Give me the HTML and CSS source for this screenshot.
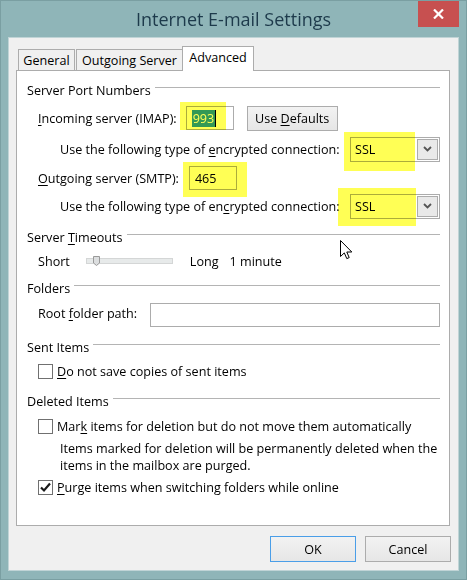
FILE: index.html
```html
<!DOCTYPE html>
<html>
<head>
<meta charset="utf-8">
<link rel="stylesheet" href="styles.css">
</head>
<body>
<div class="window">
  <div class="titlebar">
    <div class="title">Internet E-mail Settings</div>
    <div class="close">
      <svg width="11" height="10" viewBox="0 0 11 10"><path d="M1 0.5 L10 9.5 M10 0.5 L1 9.5" stroke="#fff" stroke-width="2.2" fill="none"/></svg>
    </div>
  </div>
  <div class="client">
    <div class="tabs">
      <div class="tab tab-general">General</div>
      <div class="tab tab-outgoing">Outgoing Server</div>
      <div class="tab tab-advanced active">Advanced</div>
    </div>
    <div class="panel">
      <div class="group-head head-ports"><span>Server Port Numbers</span><div class="rule"></div></div>

      <div class="row row-incoming indent1">
        <span class="label"><u>I</u>ncoming server (IMAP):</span>
        <div class="textbox tb-incoming"><span class="sel">993</span><span class="caret"></span></div>
        <div class="btn btn-defaults"><span>Use <u>D</u>efaults</span></div>
      </div>

      <div class="row row-enc1 indent2">
        <span class="label">Use the following type of <u>e</u>ncrypted connection:</span>
        <div class="combo"><span class="combo-text">SSL</span><div class="combo-btn"><svg width="9" height="6" viewBox="0 0 9 6"><path d="M1 1 L4.5 4.5 L8 1" stroke="#555" stroke-width="1.8" fill="none"/></svg></div></div>
      </div>

      <div class="row row-outgoing indent1">
        <span class="label"><u>O</u>utgoing server (SMTP):</span>
        <div class="textbox tb-outgoing">465</div>
      </div>

      <div class="row row-enc2 indent2">
        <span class="label">Use the following type of en<u>c</u>rypted connection:</span>
        <div class="combo"><span class="combo-text">SSL</span><div class="combo-btn"><svg width="9" height="6" viewBox="0 0 9 6"><path d="M1 1 L4.5 4.5 L8 1" stroke="#555" stroke-width="1.8" fill="none"/></svg></div></div>
      </div>

      <div class="group-head head-timeouts"><span>Server <u>T</u>imeouts</span><div class="rule"></div></div>

      <div class="row row-slider indent1">
        <span class="label">Short</span>
        <div class="track">
          <svg class="thumb" width="7" height="10" viewBox="0 0 7 10"><path d="M0.5 0.5 H6.5 V7 L3.5 9.5 L0.5 7 Z" fill="#dcdedf" stroke="#9a9a9a"/></svg>
        </div>
        <span class="label long">Long</span>
        <span class="label minute">1 minute</span>
      </div>

      <div class="group-head head-folders"><span>Folders</span><div class="rule"></div></div>

      <div class="row row-root indent1">
        <span class="label label-root">Root <u>f</u>older path:</span>
        <div class="textbox tb-root"></div>
      </div>

      <div class="group-head head-sent"><span>Sent Items</span><div class="rule"></div></div>

      <div class="row row-check row-nosave indent1">
        <span class="check"></span>
        <span class="label"><u>D</u>o not save copies of sent items</span>
      </div>

      <div class="group-head head-deleted"><span>Deleted Items</span><div class="rule"></div></div>

      <div class="row row-check row-mark indent1">
        <span class="check"></span>
        <span class="label">Mar<u>k</u> items for deletion but do not move them automatically</span>
      </div>

      <div class="note indent2">Items marked for deletion will be permanently deleted when the<br>items in the mailbox are purged.</div>

      <div class="row row-check row-purge indent1">
        <span class="check checked"><svg width="13" height="13" viewBox="0 0 13 13"><path d="M2 6.5 L5 9.5 L11 2.5" stroke="#1a1a1a" stroke-width="2.2" fill="none"/></svg></span>
        <span class="label"><u>P</u>urge items when switching folders while online</span>
      </div>

      <div class="hl hl-1"></div>
      <div class="hl hl-2"></div>
      <div class="hl hl-3"></div>
      <div class="hl hl-4"></div>
    </div>
    <div class="buttons">
      <div class="btn btn-ok">OK</div>
      <div class="btn btn-cancel">Cancel</div>
    </div>
  </div>
  <svg class="cursor" width="13" height="20" viewBox="0 0 13 20"><path d="M0.5 0.5 L0.5 16.5 L4.3 12.9 L6.8 18.6 L9.2 17.6 L6.8 12 L11.8 12 Z" fill="#fff" stroke="#000" stroke-width="1" stroke-linejoin="miter"/></svg>
</div>
</body>
</html>
```

FILE: styles.css
```css
html, body {
  margin: 0;
  padding: 0;
}

.window {
  width: 467px;
  height: 580px;
  box-sizing: border-box;
  background: #8fb5b8;
  border: 1px solid #7a9fa2;
  padding: 0 7px 8px 7px;
  position: relative;
  display: flex;
  flex-direction: column;
  font-family: "Open Sans", "Noto Sans", sans-serif;
  font-size: 12.6px;
  color: #000;
  overflow: hidden;
}

.titlebar {
  height: 36px;
  flex: none;
  display: grid;
  grid-template-columns: 1fr auto 1fr;
  align-items: start;
}

.title {
  grid-column: 2;
  padding-top: 6px;
  font-size: 18px;
  line-height: 24px;
  color: #1d3a4b;
  white-space: nowrap;
}

.close {
  grid-column: 3;
  justify-self: end;
  width: 41px;
  height: 26px;
  background: #c75050;
  display: flex;
  align-items: center;
  justify-content: center;
}

.client {
  flex: 1;
  background: #f0f0f0;
  border: 1px solid #c0d4d6;
  padding: 8px 7px 0 7px;
  display: flex;
  flex-direction: column;
}

.tabs {
  height: 24px;
  display: flex;
  align-items: flex-end;
  padding-left: 2px;
  position: relative;
  z-index: 2;
}

.tab {
  box-sizing: border-box;
  height: 21px;
  border: 1px solid #acacac;
  border-bottom: none;
  background: #f0f0f0;
  display: flex;
  align-items: center;
  justify-content: center;
  white-space: nowrap;
}

.tab-general { width: 57px; }
.tab-outgoing { width: 107px; margin-left: 1px; }
.tab-advanced { width: 72px; margin-left: -1px; }

.tab.active {
  height: 25px;
  margin-bottom: -1px;
  background: #fff;
  padding-bottom: 3px;
}

.panel {
  position: relative;
  box-sizing: border-box;
  width: 434px;
  height: 456px;
  background: #fff;
  border: 1px solid #acacac;
  padding: 0 9px 0 10px;
  flex: none;
}

.group-head {
  height: 16px;
  display: flex;
  align-items: center;
  white-space: nowrap;
}

.group-head .rule {
  flex: 1;
  height: 1px;
  background: #b4b4b4;
  margin-left: 4px;
  margin-bottom: 5px;
}

.head-ports { margin-top: 11px; }
.head-timeouts { margin-top: 10px; }
.head-folders { margin-top: 11px; }
.head-sent { margin-top: 12px; }
.head-deleted { margin-top: 13px; }

.row {
  display: flex;
  align-items: center;
  white-space: nowrap;
}

.indent1 { padding-left: 11px; }
.indent2 { padding-left: 33px; }

.row-incoming { margin-top: 7px; height: 26px; }
.row-enc1 { margin-top: 5px; height: 26px; }
.row-outgoing { margin-top: 3px; height: 26px; }
.row-enc2 { margin-top: 2px; height: 26px; }
.row-slider { margin-top: 8px; height: 16px; }
.row-root { margin-top: 7px; height: 24px; }
.row-nosave { margin-top: 7px; height: 18px; }
.row-mark { margin-top: 8px; height: 18px; }
.row-purge { margin-top: 4px; height: 18px; }

u {
  text-decoration-thickness: 1px;
  text-underline-offset: 2px;
}

.textbox {
  box-sizing: border-box;
  height: 24px;
  border: 1px solid #acacac;
  background: #fff;
  display: flex;
  align-items: center;
  padding-left: 5px;
}

.tb-incoming { width: 48px; margin-left: 9px; }
.tb-outgoing { width: 48px; margin-left: 10px; }
.tb-root { width: 290px; margin-left: auto; }

.label-root { margin-bottom: 4px; }

.sel {
  background: #3399ff;
  color: #fff;
  line-height: 17px;
  padding: 0 1px;
}

.caret {
  width: 1px;
  height: 17px;
  background: #000;
}

.btn {
  box-sizing: border-box;
  height: 25px;
  border: 1px solid #acacac;
  background: linear-gradient(#f2f2f2, #e6e6e6);
  display: flex;
  align-items: center;
  justify-content: center;
  white-space: nowrap;
}

.btn-defaults { width: 91px; margin-left: 13px; margin-top: 1px; }

.combo {
  box-sizing: border-box;
  width: 90px;
  height: 25px;
  margin-left: auto;
  border: 1px solid #acacac;
  background: #fff;
  display: flex;
  align-items: center;
  justify-content: space-between;
  padding: 1px;
}

.combo-text { padding-left: 3px; }

.combo-btn {
  box-sizing: border-box;
  width: 21px;
  height: 21px;
  border: 1px solid #acacac;
  background: #e9e9e9;
  display: flex;
  align-items: center;
  justify-content: center;
}

.track {
  position: relative;
  box-sizing: border-box;
  width: 87px;
  height: 6px;
  margin-left: 16px;
  background: #e7eaea;
  border: 1px solid #d4d6d6;
}

.thumb {
  position: absolute;
  left: 6px;
  top: -3px;
}

.long { margin-left: 17px; }
.minute { margin-left: 11px; }

.check {
  box-sizing: border-box;
  width: 15px;
  height: 15px;
  border: 1px solid #707070;
  background: #fff;
  margin-right: 4px;
  display: flex;
  align-items: center;
  justify-content: center;
  flex: none;
}

.note {
  margin-top: 5px;
  line-height: 17px;
}

.hl {
  position: absolute;
  background: #ffff55;
  mix-blend-mode: multiply;
}

.hl-1 { left: 163px; top: 31px; width: 46px; height: 28px; }
.hl-2 { left: 327px; top: 61px; width: 71px; height: 39px; }
.hl-3 { left: 166px; top: 91px; width: 64px; height: 35px; }
.hl-4 { left: 321px; top: 117px; width: 78px; height: 38px; }

.buttons {
  display: flex;
  justify-content: flex-end;
  gap: 9px;
  margin-top: 10px;
}

.btn-ok,
.btn-cancel {
  width: 86px;
  height: 26px;
}

.btn-ok {
  border-color: #4a9ee8;
}

.cursor {
  position: absolute;
  left: 339px;
  top: 239px;
}
```
